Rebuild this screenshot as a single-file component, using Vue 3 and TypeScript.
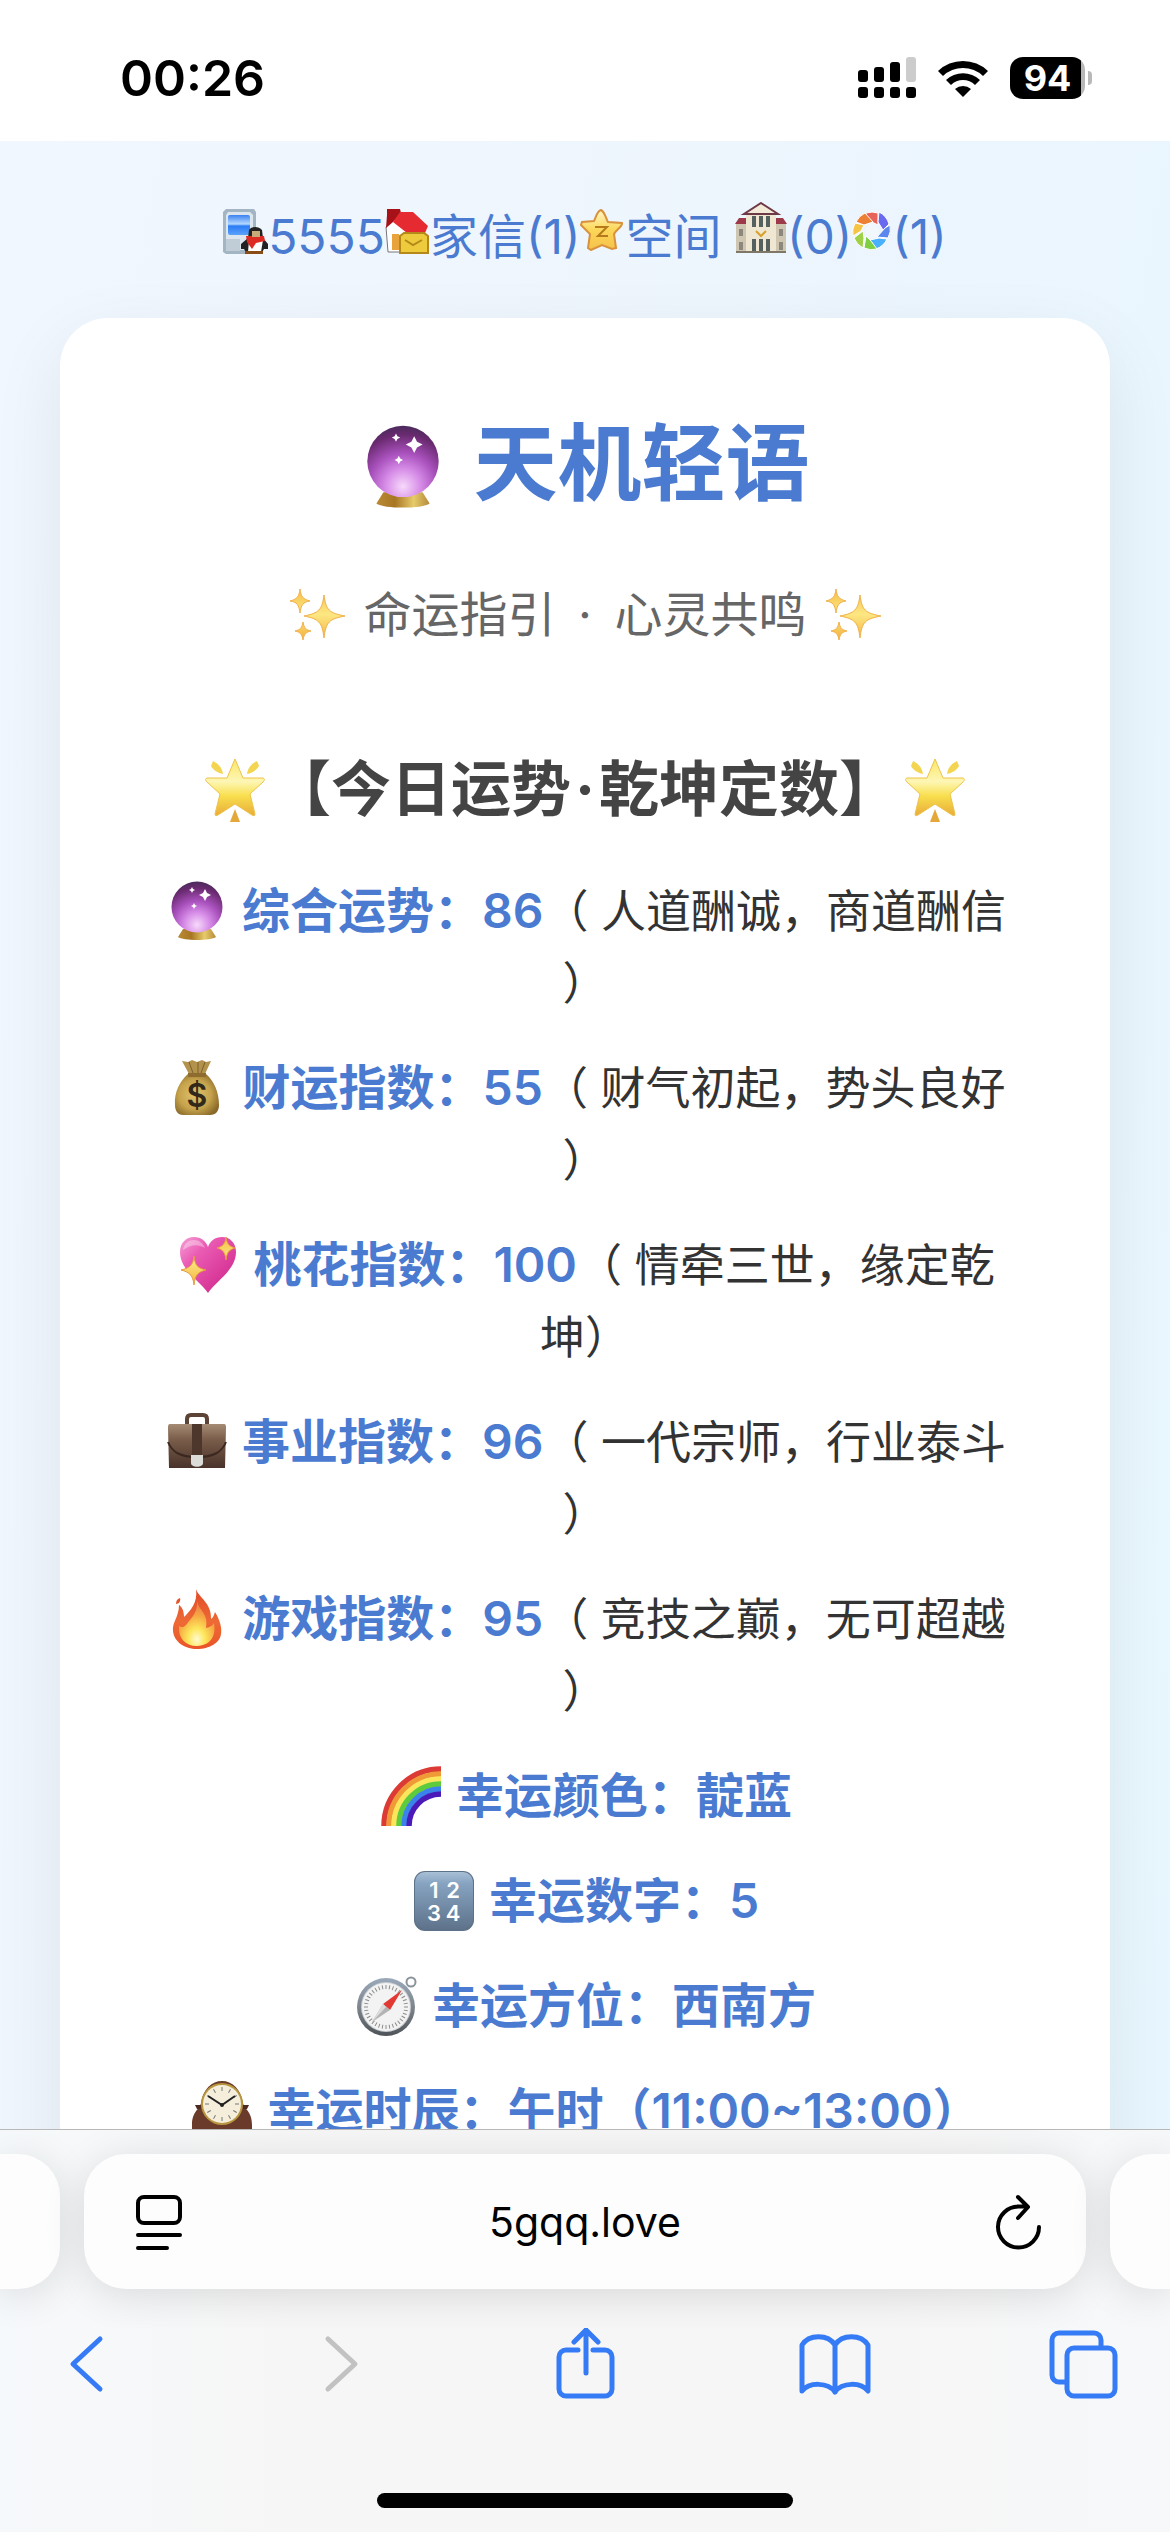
<script setup lang="ts">
interface Glyph {
  text: string
  x: number
  y: number
  size: number
  color: string
}

interface Fortune {
  icon: string
  label: string
  value: string
  remark: string
}

interface Lucky {
  icon: string
  label: string
  value: string
}

const fortunes: Fortune[] = [
  { icon: 'crystal', label: '综合运势', value: '86', remark: '（ 人道酬诚，商道酬信 ）' },
  { icon: 'money', label: '财运指数', value: '55', remark: '（ 财气初起，势头良好 ）' },
  { icon: 'heart', label: '桃花指数', value: '100', remark: '（ 情牵三世，缘定乾坤）' },
  { icon: 'briefcase', label: '事业指数', value: '96', remark: '（ 一代宗师，行业泰斗 ）' },
  { icon: 'fire', label: '游戏指数', value: '95', remark: '（ 竞技之巅，无可超越 ）' },
]

const luckies: Lucky[] = [
  { icon: 'rainbow', label: '幸运颜色', value: '靛蓝' },
  { icon: 'numbers', label: '幸运数字', value: '5' },
  { icon: 'compass', label: '幸运方位', value: '西南方' },
  { icon: 'clock', label: '幸运时辰', value: '午时（11:00~13:00）' },
]

// Characters printed on top of an icon's artwork.
const glyphs: Record<string, Glyph[]> = {
  money: [{ text: '$', x: 30, y: 49, size: 32, color: '#33291a' }],
  numbers: [
    { text: '1', x: 20, y: 27, size: 22, color: '#fff' },
    { text: '2', x: 39, y: 27, size: 22, color: '#fff' },
    { text: '3', x: 20, y: 50, size: 22, color: '#fff' },
    { text: '4', x: 39, y: 50, size: 22, color: '#fff' },
  ],
}

const compassTicks = Array.from({ length: 36 }, (_, i) => i * 10)
const clockTicks = Array.from({ length: 12 }, (_, i) => i * 30)
</script>

<template>
  <div class="phone">
    <svg class="sprites" width="0" height="0" aria-hidden="true">
      <defs>
        <radialGradient id="g-ball" cx="0.5" cy="0.85" r="0.85">
          <stop offset="0" stop-color="#f7d9fb" />
          <stop offset="0.3" stop-color="#d58ae6" />
          <stop offset="0.55" stop-color="#a951bd" />
          <stop offset="0.85" stop-color="#6a2a70" />
          <stop offset="1" stop-color="#4b2b5c" />
        </radialGradient>
        <linearGradient id="g-gold" x1="0" x2="1" y1="0" y2="0">
          <stop offset="0" stop-color="#b98a35" />
          <stop offset="0.35" stop-color="#a87623" />
          <stop offset="0.7" stop-color="#e6cb6a" />
          <stop offset="1" stop-color="#b58a3a" />
        </linearGradient>
        <radialGradient id="g-bag" cx="0.45" cy="0.5" r="0.6">
          <stop offset="0" stop-color="#e0c46c" />
          <stop offset="0.6" stop-color="#c6a34c" />
          <stop offset="1" stop-color="#8a6a2a" />
        </radialGradient>
        <linearGradient id="g-heart" x1="0" x2="1" y1="0" y2="1">
          <stop offset="0" stop-color="#f6a2d8" />
          <stop offset="0.3" stop-color="#ea5cb4" />
          <stop offset="0.7" stop-color="#d9399a" />
          <stop offset="1" stop-color="#cf2a5e" />
        </linearGradient>
        <linearGradient id="g-spark" x1="0" x2="0" y1="0" y2="1">
          <stop offset="0" stop-color="#f5c04a" />
          <stop offset="0.5" stop-color="#fde783" />
          <stop offset="1" stop-color="#f3b13c" />
        </linearGradient>
        <linearGradient id="g-case" x1="0" x2="0" y1="0" y2="1">
          <stop offset="0" stop-color="#a58b74" />
          <stop offset="0.35" stop-color="#7a5d4a" />
          <stop offset="1" stop-color="#49322a" />
        </linearGradient>
        <linearGradient id="g-fire" x1="0" x2="0" y1="0" y2="1">
          <stop offset="0" stop-color="#e04a28" />
          <stop offset="0.55" stop-color="#ee6a35" />
          <stop offset="1" stop-color="#ea5428" />
        </linearGradient>
        <radialGradient id="g-flame" cx="0.5" cy="0.85" r="0.7">
          <stop offset="0" stop-color="#fffbd0" />
          <stop offset="0.35" stop-color="#fde65a" />
          <stop offset="0.75" stop-color="#f6a843" />
          <stop offset="1" stop-color="#f08a48" />
        </radialGradient>
        <linearGradient id="g-key" x1="0" x2="0" y1="0" y2="1">
          <stop offset="0" stop-color="#a9c0d6" />
          <stop offset="0.2" stop-color="#86a3c1" />
          <stop offset="1" stop-color="#5f738b" />
        </linearGradient>
        <linearGradient id="g-rim" x1="0" x2="0" y1="0" y2="1">
          <stop offset="0" stop-color="#9aa9bb" />
          <stop offset="0.5" stop-color="#7e858d" />
          <stop offset="1" stop-color="#4d5358" />
        </linearGradient>
        <linearGradient id="g-star" x1="0" x2="0" y1="0" y2="1">
          <stop offset="0" stop-color="#fbe768" />
          <stop offset="0.4" stop-color="#fdf6b4" />
          <stop offset="0.65" stop-color="#f8df4e" />
          <stop offset="1" stop-color="#e9ab38" />
        </linearGradient>
        <linearGradient id="g-qstar" x1="0" x2="0" y1="0" y2="1">
          <stop offset="0" stop-color="#fff6c8" />
          <stop offset="0.5" stop-color="#fbd758" />
          <stop offset="1" stop-color="#f5c14a" />
        </linearGradient>
        <linearGradient id="g-screen" x1="0" x2="0" y1="0" y2="1">
          <stop offset="0" stop-color="#3b82f0" />
          <stop offset="0.45" stop-color="#b4d8ff" />
          <stop offset="0.55" stop-color="#2b7cf5" />
          <stop offset="1" stop-color="#5aa2fb" />
        </linearGradient>
      </defs>

      <symbol id="crystal" viewBox="0 0 60 60">
        <path d="M16 48h28l5 8c-5 4-33 4-38 0z" fill="url(#g-gold)" />
        <circle cx="30" cy="26" r="25.500" fill="url(#g-ball)" />
        <path d="M38 8l2 4 4 2-4 2-2 4-2-4-4-2 4-2zM25 6l1 2 2 1-2 1-1 2-1-2-2-1 2-1zM27 22l1 2 2 1-2 1-1 2-1-2-2-1 2-1z" fill="#fff" />
      </symbol>

      <symbol id="money" viewBox="0 0 60 60">
        <path d="M21 16c-8 7-14 18-13 31 0 6 3 10 8 10h27c6 0 9-4 9-10 0-13-5-24-13-31z" fill="url(#g-bag)" />
        <path d="M15 3l7 13h16l6-13-5 1-4-2-5 2-5-2-4 2z" fill="#b3924c" />
        <path d="M22 4l4 11M31 4v11M38 4l-4 11" stroke="#7d5f2b" stroke-width="1" fill="none" />
        <path d="M21 15h18v4H21z" fill="#8e6c30" />
      </symbol>

      <symbol id="heart" viewBox="0 0 60 60">
        <path d="M30 58C22 46 2 35 2 17 2 8 8 2 16 2c7 0 12 4 14 10C32 6 37 2 44 2c8 0 14 6 14 15 0 18-20 29-28 41z" fill="url(#g-heart)" />
        <path d="M5 15c1-7 6-10 11-10s9 3 11 8c-7-4-14-4-22 2z" fill="#fff" opacity="0.35" />
        <path d="M16 21c1 10 4 12 12 14-8 2-11 5-12 15-1-10-5-13-13-15 8-2 12-4 13-14zM48 2c1 7 3 9 9 11-6 2-8 4-9 12-1-8-3-10-9-12 6-2 8-4 9-11z" fill="url(#g-spark)" stroke="#e59a3c" stroke-width="1" />
      </symbol>

      <symbol id="briefcase" viewBox="0 0 60 60">
        <path d="M20 12V7c0-3 2-4 4-4h12c2 0 4 1 4 4v5" fill="none" stroke="#5b4336" stroke-width="4" />
        <path d="M3 12h54c2 0 2 2 2 4l-1 40H2L1 16c0-2 0-4 2-4z" fill="url(#g-case)" />
        <path d="M1 30c4 10 12 15 29 15s25-5 29-15" fill="none" stroke="#3b2820" stroke-width="2" />
        <path d="M25 12h10v32H25z" fill="#4d372c" />
        <path d="M24 43h12v8c0 5-12 5-12 0z" fill="#dcdcd8" />
      </symbol>

      <symbol id="fire" viewBox="0 0 60 60">
        <path d="M29 0c2 8 16 14 15 30 2-1 3-4 4-7 5 8 7 16 6 22-1 9-12 15-24 15S7 53 6 42c-1-9 6-14 6-26 3 2 5 6 5 12 6-6 14-14 12-28zM13 9c1 3-1 6-4 6 0-3 1-5 4-6z" fill="url(#g-fire)" />
        <path d="M30 12c1 9 12 12 9 27 4-1 6-2 8-5 2 12-2 22-17 23-12 0-19-8-18-20 3 2 5 1 7-1 5-7 12-12 11-24z" fill="url(#g-flame)" />
      </symbol>

      <symbol id="rainbow" viewBox="0 0 60 60">
        <g fill="none" stroke-width="5.500">
          <path d="M3 60A57 57 0 0 1 60 3" stroke="#dc3a35" />
          <path d="M8 60A52 52 0 0 1 60 8" stroke="#f09a37" />
          <path d="M13 60A47 47 0 0 1 60 13" stroke="#fbe65b" />
          <path d="M18 60A42 42 0 0 1 60 18" stroke="#5ecb3c" />
          <path d="M23 60A37 37 0 0 1 60 23" stroke="#3a83ea" />
          <path d="M28 60A32 32 0 0 1 60 28" stroke="#4a1bb8" />
        </g>
      </symbol>

      <symbol id="numbers" viewBox="0 0 60 60">
        <rect width="60" height="60" rx="11" fill="#5d7188" />
        <rect x="1" y="1" width="58" height="57" rx="10" fill="url(#g-key)" />
      </symbol>

      <symbol id="compass" viewBox="0 0 60 60">
        <circle cx="54" cy="6" r="4.500" fill="none" stroke="#8b939b" stroke-width="2" />
        <circle cx="29" cy="31" r="29" fill="url(#g-rim)" />
        <circle cx="29" cy="31" r="25" fill="#c9cdd0" />
        <circle cx="29" cy="31" r="24" fill="#f3f3f3" />
        <path v-for="t in compassTicks" :key="t" d="M29 9v4" stroke="#8b8b8b" stroke-width="1" :transform="`rotate(${t} 29 31)`" />
        <path d="M45 14L33 34l-7-6z" fill="#e23a33" />
        <path d="M15 46l11-18 7 6z" fill="#b3b3b3" />
        <path d="M15 46l14-15-3-3z" fill="#dcdcdc" />
      </symbol>

      <symbol id="clock" viewBox="0 0 60 60">
        <path d="M9 22C11 8 20 0 30 0s19 8 21 22c1 6 9 8 9 22v16H0V44c0-14 8-16 9-22z" fill="#6a3a2b" />
        <path d="M3 24h6v4H5zM57 24h-6v4h4z" fill="#4e2a20" />
        <circle cx="30" cy="23" r="21" fill="#b8963f" />
        <circle cx="30" cy="23" r="19" fill="#f4eedb" />
        <path v-for="t in clockTicks" :key="t" d="M30 6v4" stroke="#777" stroke-width="1" :transform="`rotate(${t} 30 23)`" />
        <path d="M16 15l14 9 13-9" fill="none" stroke="#222" stroke-width="2" />
        <circle cx="30" cy="24" r="2" fill="#222" />
      </symbol>

      <symbol id="sparkles" viewBox="0 0 60 60">
        <path d="M37 10c2 15 5 18 21 21-16 3-19 6-21 22-2-16-5-19-20-22 15-3 18-6 20-21zM13 4c1 8 3 10 10 12-7 1-9 4-10 12-1-8-3-11-10-12 7-2 9-4 10-12zM16 37c1 6 3 8 8 9-5 1-7 3-8 9-1-6-3-8-8-9 5-1 7-3 8-9z" fill="url(#g-spark)" stroke="#f0b04a" stroke-width="1" />
      </symbol>

      <symbol id="glow" viewBox="0 0 60 64">
        <path d="M30 0l8 19h19c3 0 3 2 1 4L45 35l5 20c0 2-1 2-3 1L30 45 13 56c-2 1-3 1-3-1l5-20L2 23c-2-2-2-4 1-4h19z" fill="url(#g-star)" stroke="#edc24a" stroke-width="1" />
        <path d="M8 2c6 3 9 7 10 13-5-1-10-4-12-8zM52 2c-6 3-9 7-10 13 5-1 10-4 12-8z" fill="#f4d552" />
        <path d="M30 50l5 13H25z" fill="#e4a83a" />
      </symbol>

      <symbol id="handset" viewBox="0 0 45 45">
        <path d="M3 0h28l2 3v40l-2 2H3l-3-2V3z" fill="#a3b4c2" />
        <path d="M5 3h22l3 3v35H3V6z" fill="#dbe6ef" />
        <rect x="5" y="6" width="22" height="20" rx="2" fill="url(#g-screen)" />
        <path d="M3 30h14v12H3z" fill="#c0ccd6" />
        <path d="M26 21c2-4 10-4 13 0l1 8 5 6v5h-4l-3 5H24l-3-5h-3v-5l7-6z" fill="#222" />
        <path d="M26 31h14l-2 12H25z" fill="#fff" />
        <path d="M23 27h18l1 5-9 2-4 6-5-7z" fill="#dd2b23" />
        <path d="M29 22h8v6h-8z" fill="#c8aa78" />
        <path d="M22 42h18v3H22z" fill="#8a4c16" />
      </symbol>

      <symbol id="home" viewBox="0 0 45 45">
        <path d="M1 18L11 7l11 8v28H3z" fill="#fff" stroke="#777" stroke-width="1" />
        <path d="M7 25h7v16H7z" fill="#e9a33c" />
        <path d="M2 0h13l1 4-8 9-7 6 1-13z" fill="#a61218" />
        <path d="M15 3h13l15 14-3 7H22L8 13z" fill="#e52b31" />
        <path d="M15 27l4-3h20l4 3v17H15z" fill="#edcb3c" stroke="#b4891a" stroke-width="2" />
        <path d="M20 31l8 5 9-5" fill="none" stroke="#b4891a" stroke-width="2" />
      </symbol>

      <symbol id="qzone" viewBox="0 0 45 42">
        <path d="M21 1c4 2 5 9 7 12l14 1c1 3-6 7-8 11l2 14-4 1-10-4-11 5-3-2 2-14L1 16l1-3 12-1c2-4 3-10 7-11z" fill="url(#g-qstar)" stroke="#d9913b" stroke-width="2" />
        <path d="M15 18h12l-9 9h10" fill="none" stroke="#b67a1c" stroke-width="2" />
      </symbol>

      <symbol id="hall" viewBox="0 0 52 52">
        <path d="M1 20h50v31H1z" fill="#cfc6b2" />
        <path d="M11 12h30v39H11z" fill="#efe7d2" />
        <path d="M26 1l17 11H9z" fill="#f3ead8" stroke="#6e3a48" stroke-width="2" />
        <path d="M0 22l4-6h7v6zM52 22l-4-6h-7v6z" fill="#9c3a4a" />
        <path d="M17 14h4v11h-4zM24 14h4v11h-4zM31 14h4v11h-4zM17 37h4v14h-4zM24 37h4v14h-4zM31 37h4v14h-4z" fill="#55605f" />
        <path d="M4 27h4v7H4zM44 27h4v7h-4zM4 40h4v8H4zM44 40h4v8h-4z" fill="#8c877c" />
        <path d="M21 29l5 5 5-5" fill="none" stroke="#d9a02c" stroke-width="2" />
        <path d="M1 49h50v2H1z" fill="#7f7767" />
      </symbol>

      <symbol id="aperture" viewBox="0 0 40 40">
        <g stroke="#fff" stroke-width="1">
          <path d="M14 2a19 19 0 0 1 12 0v12L14 8z" fill="#e8635a" />
          <path d="M27 1a19 19 0 0 1 10 12l-6 6-5-8z" fill="#6a6af0" />
          <path d="M38 14a19 19 0 0 1-2 13l-11-1 8-9z" fill="#5b86ee" />
          <path d="M35 28a19 19 0 0 1-11 10l-6-9 9-2z" fill="#49b0fb" />
          <path d="M25 38a19 19 0 0 1-13-1l2-12 5 5z" fill="#7fcf42" />
          <path d="M11 37a19 19 0 0 1-9-10l9-7 1 7z" fill="#9fd045" />
          <path d="M1 25a19 19 0 0 1 2-13l9 2-3 6z" fill="#f6c445" />
          <path d="M4 11a19 19 0 0 1 9-9l8 9-9 3z" fill="#ee8035" />
        </g>
        <circle cx="20" cy="20" r="7" fill="#f2f7fc" />
      </symbol>
    </svg>

    <header class="status">
      <time class="time">00:26</time>
      <div class="indicators">
        <svg width="58" height="42" viewBox="0 0 58 42" aria-hidden="true">
          <rect x="0" y="13" width="10" height="12" rx="3" />
          <rect x="16" y="10" width="10" height="15" rx="3" />
          <rect x="32" y="5" width="10" height="20" rx="3" />
          <rect x="48" y="0" width="10" height="25" rx="3" fill="#ccc" />
          <rect x="0" y="30" width="10" height="11" rx="3" />
          <rect x="16" y="30" width="10" height="11" rx="3" />
          <rect x="32" y="30" width="10" height="11" rx="3" />
          <rect x="48" y="30" width="10" height="11" rx="3" />
        </svg>
        <svg class="wifi" width="52" height="38" viewBox="0 0 52 38" aria-hidden="true">
          <path d="M1 12a36 36 0 0 1 50 0l-5 5a29 29 0 0 0-40 0z" />
          <path d="M9 21a25 25 0 0 1 34 0l-5 5a17 17 0 0 0-24 0z" />
          <path d="M26 38l-8-8a12 12 0 0 1 16 0z" />
        </svg>
        <span class="battery">94</span>
        <span class="nub"></span>
      </div>
    </header>

    <main class="page">
      <nav class="links">
        <a href="#"><svg width="45" height="45" aria-hidden="true"><use href="#handset" /></svg>5555</a><a href="#"><svg width="45" height="45" aria-hidden="true"><use href="#home" /></svg>家信(1)</a><a href="#"><svg class="raised" width="45" height="42" aria-hidden="true"><use href="#qzone" /></svg>空间</a>{{ ' ' }}<a href="#"><svg width="52" height="52" aria-hidden="true"><use href="#hall" /></svg>(0)</a><a href="#"><svg class="raised" width="40" height="40" aria-hidden="true"><use href="#aperture" /></svg>(1)</a>
      </nav>

      <section class="card">
        <h1><svg class="ball" aria-hidden="true"><use href="#crystal" /></svg> 天机轻语</h1>
        <p class="subtitle">
          <svg class="emoji" aria-hidden="true"><use href="#sparkles" /></svg> 命运指引 <span class="dot">·</span> 心灵共鸣 <svg class="emoji" aria-hidden="true"><use href="#sparkles" /></svg>
        </p>
        <h2><svg class="glow" aria-hidden="true"><use href="#glow" /></svg>【今日运势<span class="dot">·</span>乾坤定数】<svg class="glow" aria-hidden="true"><use href="#glow" /></svg></h2>
        <p v-for="f in fortunes" :key="f.label" class="row">
          <strong><svg class="emoji" viewBox="0 0 60 60" aria-hidden="true"><use :href="`#${f.icon}`" /><text v-for="g in glyphs[f.icon]" :key="g.text" :x="g.x" :y="g.y" :font-size="g.size" :fill="g.color">{{ g.text }}</text></svg> {{ f.label }}：{{ f.value }}</strong>{{ f.remark }}
        </p>
        <p v-for="l in luckies" :key="l.label" class="row">
          <strong><svg class="emoji" viewBox="0 0 60 60" aria-hidden="true"><use :href="`#${l.icon}`" /><text v-for="g in glyphs[l.icon]" :key="g.text" :x="g.x" :y="g.y" :font-size="g.size" :fill="g.color">{{ g.text }}</text></svg> {{ l.label }}：{{ l.value }}</strong>
        </p>
      </section>
    </main>

    <footer class="browser">
      <div class="tabs">
        <div class="tab previous"></div>
        <div class="tab address">
          <button type="button" aria-label="页面菜单">
            <svg width="54" height="56" viewBox="-8 0 54 56">
              <rect x="2" y="3" width="42" height="26" rx="6" />
              <path d="M2 41h42M2 54h29" />
            </svg>
          </button>
          <button type="button" class="url">5gqq.love</button>
          <button type="button" aria-label="刷新">
            <svg width="54" height="56" viewBox="-8 0 54 56">
              <path d="M43 33A20.500 20.500 0 1 1 23 12.500h8M22 3l10 10-10 11" />
            </svg>
          </button>
        </div>
        <div class="tab next"></div>
      </div>
      <nav class="tools">
        <button type="button" aria-label="后退">
          <svg viewBox="0 0 72 72"><path d="M50 11L23 36l27 25" /></svg>
        </button>
        <button type="button" aria-label="前进" disabled>
          <svg viewBox="0 0 72 72"><path d="M28 11l27 25-27 25" /></svg>
        </button>
        <button type="button" aria-label="分享">
          <svg viewBox="0 0 72 72"><path d="M29 22H17a7 7 0 0 0-7 7v32a7 7 0 0 0 7 7h39a7 7 0 0 0 7-7V29a7 7 0 0 0-7-7H44M37 45V2M25 14L37 2l12 12" /></svg>
        </button>
        <button type="button" aria-label="书签">
          <svg viewBox="0 0 72 72"><path d="M36 17C29 6 10 6 3 17v46c7-9 26-9 33 1 7-10 26-10 33-1V17C62 6 43 6 36 17zv47" /></svg>
        </button>
        <button type="button" aria-label="标签页">
          <svg viewBox="0 0 72 72"><path d="M18 54h-7a7 7 0 0 1-7-7V12a7 7 0 0 1 7-7h35a7 7 0 0 1 7 7v7" /><rect x="19" y="20" width="48" height="48" rx="7" /></svg>
        </button>
      </nav>
      <div class="home-bar"></div>
    </footer>
  </div>
</template>

<style>
body {
  margin: 0;
  background: #fff;
}
</style>

<style scoped>
.phone {
  display: flex;
  flex-direction: column;
  height: 100vh;
  overflow: hidden;
  font-family: Inter, "Noto Sans CJK SC", sans-serif;
  color: #333;
}

.sprites {
  position: absolute;
}

.status {
  flex: none;
  display: flex;
  align-items: center;
  justify-content: space-between;
  height: 141px;
  padding: 0 78px 0 120px;
  box-sizing: border-box;
  color: #000;
}

.time {
  margin-top: 15px;
  font-size: 50px;
  font-weight: 600;
}

.indicators {
  display: flex;
  align-items: center;
  margin-top: 15px;
}

.wifi {
  margin: 0 21px;
}

.battery {
  width: 75px;
  height: 42px;
  border-radius: 13px;
  background: linear-gradient(to right, #000 71px, #b8b8b8 71px);
  color: #fff;
  font-size: 36px;
  font-weight: 700;
  line-height: 42px;
  text-align: center;
}

.nub {
  width: 4px;
  height: 14px;
  margin-left: 3px;
  border-radius: 0 7px 7px 0;
  background: #b8b8b8;
}

.page {
  flex: 1;
  min-height: 0;
  overflow: hidden;
  padding: 60px 60px 0;
  background: linear-gradient(100deg, #f1f7ff 0%, #edf5fd 50%, #e8f7ff 100%);
}

.links {
  margin-bottom: 45px;
  font-size: 48px;
  line-height: 72px;
  text-align: center;
}

.links a {
  color: #4a7bd0;
  text-decoration: none;
}

.raised {
  vertical-align: 3px;
}

.card {
  padding: 78px 90px;
  border-radius: 48px;
  background: #fff;
  box-shadow: 0 24px 72px rgba(0, 0, 0, 0.08);
  text-align: center;
}

h1 {
  margin: 0 0 45px;
  font-size: 84px;
  line-height: 135px;
  color: #4a7bd0;
}

h1 .ball {
  width: 84px;
  height: 84px;
  margin-right: 9px;
  vertical-align: -15px;
}

.subtitle {
  margin: 0 0 87px;
  font-size: 48px;
  line-height: 78px;
  color: #666;
}

.subtitle .dot {
  margin: 0 9px;
}

h2 {
  margin: 0 0 39px;
  font-size: 60px;
  line-height: 96px;
  color: #444;
  white-space: nowrap;
}

h2 .dot {
  margin: 0 4px;
}

.glow {
  width: 60px;
  height: 64px;
  margin: 0 6px;
  vertical-align: -12px;
}

.emoji {
  width: 60px;
  height: 60px;
  margin: 0 3px;
  vertical-align: -13px;
}

.emoji text {
  font-weight: 600;
  text-anchor: middle;
}

.row {
  margin: 0 0 33px;
  font-size: 45px;
  line-height: 72px;
}

.row strong {
  font-size: 48px;
  font-weight: 600;
  line-height: 60px;
  color: #4a7bd0;
}

.browser {
  flex: none;
  border-top: 1px solid #b8b8b8;
  background: linear-gradient(to right, #f6f9fb, #f6f6f6 25%, #f6f6f6 75%, #f6f8fa);
}

.tabs {
  display: grid;
  grid-template-columns: 60px 1fr 60px;
  gap: 24px;
  padding: 24px 0 39px;
  overflow: hidden;
}

.tab {
  height: 135px;
  border-radius: 42px;
  background: #fdfdfd;
  box-shadow: 0 6px 42px rgba(0, 0, 0, 0.12);
}

.previous {
  border-radius: 0 42px 42px 0;
}

.next {
  border-radius: 42px 0 0 42px;
}

.address {
  display: flex;
  align-items: center;
  justify-content: space-between;
  padding: 0 44px;
  color: #000;
}

button {
  padding: 0;
  border: 0;
  background: none;
  color: inherit;
  font: inherit;
}

button svg {
  display: block;
  fill: none;
  stroke: currentColor;
  stroke-width: 4;
  stroke-linecap: round;
  stroke-linejoin: round;
}

.url {
  font-size: 41px;
}

.tools {
  display: flex;
  justify-content: space-between;
  padding: 0 50px;
  color: #367bf6;
}

.tools svg {
  width: 72px;
  height: 72px;
  stroke-width: 5;
}

.tools button:disabled {
  color: #c2c2c2;
}

.home-bar {
  width: 416px;
  height: 15px;
  margin: 93px auto 24px;
  border-radius: 8px;
  background: #000;
}
</style>
